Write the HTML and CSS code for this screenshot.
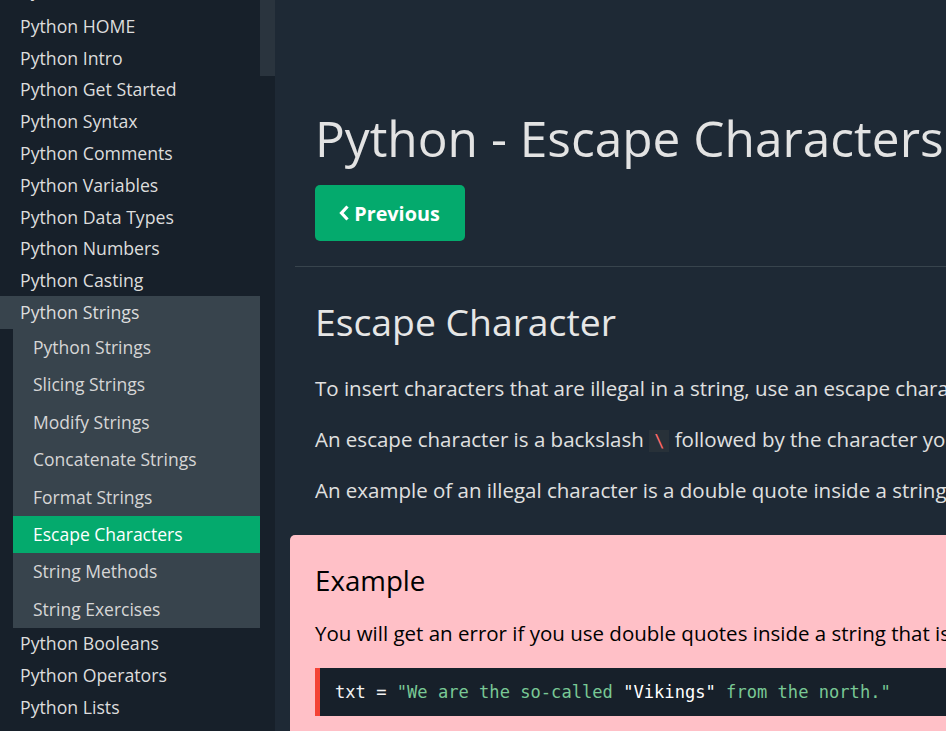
FILE: index.html
```html
<!DOCTYPE html>
<html lang="en">
<head>
<meta charset="utf-8">
<title>Python - Escape Characters</title>
<link rel="stylesheet" href="styles.css">
</head>
<body>
<div class="page">
  <nav class="sidebar">
    <div class="menu">
      <a class="item top">Python Tutorial</a>
      <a class="item">Python HOME</a>
      <a class="item">Python Intro</a>
      <a class="item">Python Get Started</a>
      <a class="item">Python Syntax</a>
      <a class="item">Python Comments</a>
      <a class="item">Python Variables</a>
      <a class="item">Python Data Types</a>
      <a class="item">Python Numbers</a>
      <a class="item">Python Casting</a>
      <a class="item open">Python Strings</a>
      <div class="submenu">
        <a class="sub">Python Strings</a>
        <a class="sub">Slicing Strings</a>
        <a class="sub">Modify Strings</a>
        <a class="sub">Concatenate Strings</a>
        <a class="sub">Format Strings</a>
        <a class="sub active">Escape Characters</a>
        <a class="sub">String Methods</a>
        <a class="sub">String Exercises</a>
      </div>
      <a class="item">Python Booleans</a>
      <a class="item">Python Operators</a>
      <a class="item">Python Lists</a>
    </div>
  </nav>
  <div class="scrolltrack"><div class="thumb"></div></div>
  <main class="main">
    <div class="head">
      <h1 class="title">Python - Escape Characters</h1>
      <a class="btn-prev"><svg class="chev" width="12" height="16" viewBox="0 0 12 16"><path d="M9.5 1.5 L3.5 8 L9.5 14.5" fill="none" stroke="#fff" stroke-width="3.2" stroke-linejoin="miter"/></svg>Previous</a>
    </div>
    <hr class="rule">
    <section class="content">
      <h2 class="h2">Escape Character</h2>
      <p class="para">To insert characters that are illegal in a string, use an escape character.</p>
      <p class="para">An escape character is a backslash <code class="inline">\</code> followed by the character you want to insert.</p>
      <p class="para">An example of an illegal character is a double quote inside a string that is surrounded by double quotes:</p>
    </section>
    <section class="example">
      <h3 class="ex-title">Example</h3>
      <p class="ex-text">You will get an error if you use double quotes inside a string that is surrounded by double quotes:</p>
      <div class="code"><span class="plain">txt = </span><span class="str">"We are the so-called </span><span class="hl">"Vikings"</span><span class="str"> from the north."</span></div>
    </section>
  </main>
</div>
</body>
</html>
```

FILE: styles.css
```css
* { box-sizing: border-box; }
html, body { margin: 0; padding: 0; }
body {
  background: #1e2935;
  font-family: "Open Sans", "Noto Sans", sans-serif;
  color: #ddd;
  overflow: hidden;
  height: 731px;
}
.page {
  display: flex;
  height: 731px;
  overflow: hidden;
}
.sidebar {
  width: 260px;
  flex: 0 0 260px;
  background: #17202a;
  overflow: hidden;
}
.menu {
  display: flex;
  flex-direction: column;
  margin-top: -21px;
}
.item {
  display: block;
  height: 31.8px;
  line-height: 31.8px;
  padding-left: 20px;
  font-size: 17.7px;
  color: #ddd;
  white-space: nowrap;
  overflow: hidden;
}
.item.top {
  line-height: 22px;
}
.item.open {
  background: #38444d;
  height: 33px;
  line-height: 33px;
  margin-top: -1px;
}
.submenu {
  margin-left: 13px;
  background: #38444d;
  display: flex;
  flex-direction: column;
}
.sub {
  display: block;
  height: 37.4px;
  line-height: 37.4px;
  padding-left: 20px;
  font-size: 17.5px;
  color: #d6d6d6;
  white-space: nowrap;
}
.sub.active {
  background: #04aa6d;
  color: #fff;
}
.scrolltrack {
  width: 15px;
  flex: 0 0 15px;
  background: #17202a;
}
.thumb {
  height: 76px;
  background: #2a343e;
}
.main {
  flex: 1;
  min-width: 0;
  padding-left: 20px;
  overflow: hidden;
}
.head {
  padding: 100px 0 0 20px;
}
.title {
  margin: 0;
  font-weight: 400;
  font-size: 49.6px;
  line-height: 76px;
  color: #e3e3e3;
  white-space: nowrap;
}
.btn-prev {
  display: inline-flex;
  align-items: center;
  justify-content: center;
  gap: 4px;
  width: 150px;
  height: 56px;
  margin-top: 9px;
  background: #04aa6d;
  border-radius: 5px;
  color: #fff;
  font-weight: 700;
  font-size: 19.8px;
  padding-right: 2px;
}
.chev { display: block; }
.rule {
  margin: 25px 0 0 0;
  border: 0;
  border-top: 1px solid #38444d;
  height: 0;
}
.content {
  padding-left: 20px;
  padding-top: 24px;
}
.h2 {
  margin: 0;
  font-weight: 400;
  font-size: 37.3px;
  line-height: 62px;
  color: #e6e6e6;
  white-space: nowrap;
}
.para {
  margin: 0;
  font-size: 20.5px;
  line-height: 26px;
  margin-top: 25px;
  color: #e0e0e0;
  white-space: nowrap;
}
.para:first-of-type { margin-top: 22px; }
.para:last-of-type { margin-top: 23px; }
.inline {
  font-family: "DejaVu Sans Mono", monospace;
  font-size: 17px;
  background: #283139;
  color: #ff6a6a;
  padding: 1px 5px;
}
.example {
  margin-top: 32px;
  margin-left: -5px;
  background: #ffc0c7;
  border-radius: 5px 0 0 0;
  padding: 23px 0 20px 25px;
  color: #000;
}
.ex-title {
  margin: 0;
  font-weight: 400;
  font-size: 27.7px;
  line-height: 44px;
}
.ex-text {
  margin: 0;
  margin-top: 18px;
  font-size: 20.5px;
  line-height: 26px;
  white-space: nowrap;
}
.code {
  margin-top: 22px;
  background: #17202a;
  border-left: 5px solid #f44336;
  height: 48px;
  line-height: 48px;
  padding-left: 15px;
  font-family: "DejaVu Sans Mono", monospace;
  font-size: 17.1px;
  white-space: nowrap;
  color: #fff;
}
.plain { color: #f2f2f2; }
.str { color: #79c895; }
.hl { color: #fff; }
```
